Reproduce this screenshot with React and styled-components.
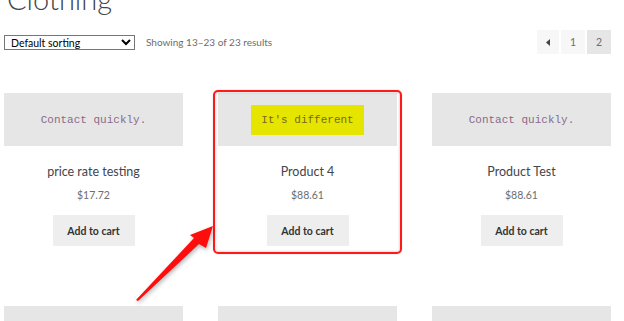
import styled, { createGlobalStyle } from "styled-components";

const GlobalStyle = createGlobalStyle`
  body {
    margin: 0;
    background: #ffffff;
    font-family: "Source Sans Pro", Lato, "Open Sans", sans-serif;
    color: #43454b;
    overflow: hidden;
  }
`;

const Page = styled.div`
  position: relative;
  width: 624px;
  height: 321px;
  padding: 0 13px 0 4px;
  box-sizing: border-box;
  overflow: hidden;
`;

const Title = styled.h1`
  margin: -16px 0 0 3px;
  font-family: Lato, sans-serif;
  font-weight: 300;
  font-size: 29px;
  line-height: 30px;
  color: #43454b;
`;

const Toolbar = styled.div`
  display: flex;
  align-items: center;
  margin-top: 16px;
  height: 24px;
`;

const Sorting = styled.select`
  width: 131px;
  height: 15px;
  padding: 0 0 0 2px;
  font-family: Lato, sans-serif;
  font-size: 10.5px;
  color: #000;
  border: 1px solid #767676;
  border-radius: 0;
  background: #fff;
`;

const Count = styled.span`
  margin-left: 11px;
  font-family: Lato, sans-serif;
  font-size: 10px;
  color: #6d6d6d;
`;

const Pager = styled.nav`
  margin-left: auto;
  display: flex;
  gap: 2px;
`;

const PageLink = styled.span`
  display: flex;
  align-items: center;
  justify-content: center;
  width: ${(p) => (p.$narrow ? 22 : 24)}px;
  height: 24px;
  font-family: Lato, sans-serif;
  font-size: 10.5px;
  color: #6d6d6d;
  background: ${(p) => (p.$current ? "#e6e6e6" : "#f7f7f7")};
`;

const Grid = styled.ul`
  list-style: none;
  margin: 39px 0 0;
  padding: 0;
  display: grid;
  grid-template-columns: repeat(3, 179px);
  column-gap: 35px;
  row-gap: 60px;
`;

const Card = styled.li`
  position: relative;
  display: flex;
  flex-direction: column;
  align-items: center;

  ${(p) =>
    p.$highlight &&
    `
    &::after {
      content: "";
      position: absolute;
      left: -5px;
      right: -5px;
      top: -3px;
      bottom: -8px;
      border: 2px solid #ff1a1a;
      border-radius: 5px;
      box-shadow: inset 0 0 3px rgba(0,0,0,0.25), 0 0 2px rgba(0,0,0,0.15);
      pointer-events: none;
    }
  `}
`;

const Thumb = styled.div`
  width: 100%;
  height: 53px;
  background: #e6e6e6;
  display: flex;
  align-items: center;
  justify-content: center;
`;

const ThumbText = styled.span`
  font-family: "Liberation Mono", monospace;
  font-size: 11px;
  color: ${(p) => (p.$marked ? "#7a6a1e" : "#8a6a8c")};
  background: ${(p) => (p.$marked ? "#e5e500" : "transparent")};
  padding: ${(p) => (p.$marked ? "8px 10px" : "0")};
  line-height: 14px;
`;

const Name = styled.h2`
  margin: 18px 0 0;
  font-family: Lato, sans-serif;
  font-weight: 400;
  font-size: 12.5px;
  line-height: 16px;
  color: #43454b;
`;

const Price = styled.span`
  margin-top: 8px;
  font-family: Lato, sans-serif;
  font-size: 10.5px;
  line-height: 14px;
  color: #6d6d6d;
`;

const CartButton = styled.button`
  margin-top: 13px;
  width: 82px;
  height: 31px;
  border: none;
  background: #eeeeee;
  font-family: Lato, sans-serif;
  font-weight: 700;
  font-size: 10.5px;
  color: #333333;
  cursor: pointer;
`;

const Pointer = styled.svg`
  position: absolute;
  left: 130px;
  top: 220px;
  width: 90px;
  height: 86px;
  overflow: visible;
  filter: drop-shadow(1px 2px 2px rgba(0, 0, 0, 0.3));
`;

const products = [
  { name: "price rate testing", price: "$17.72", thumb: "Contact quickly." },
  { name: "Product 4", price: "$88.61", thumb: "It's different", marked: true },
  { name: "Product Test", price: "$88.61", thumb: "Contact quickly." },
  { name: "", price: "", thumb: "" },
  { name: "", price: "", thumb: "" },
  { name: "", price: "", thumb: "" },
];

export default function App() {
  return (
    <Page>
      <GlobalStyle />
      <Title>Clothing</Title>
      <Toolbar>
        <Sorting defaultValue="default">
          <option value="default">Default sorting</option>
        </Sorting>
        <Count>Showing 13–23 of 23 results</Count>
        <Pager>
          <PageLink $narrow>
            <svg width="5" height="7" viewBox="0 0 5 7">
              <path d="M4 0 L0 3.5 L4 7 Z" fill="#43454b" />
            </svg>
          </PageLink>
          <PageLink>1</PageLink>
          <PageLink $current>2</PageLink>
        </Pager>
      </Toolbar>
      <Grid>
        {products.map((p, i) => (
          <Card key={i} $highlight={p.marked}>
            <Thumb>
              {p.thumb && <ThumbText $marked={p.marked}>{p.thumb}</ThumbText>}
            </Thumb>
            {p.name && <Name>{p.name}</Name>}
            {p.price && <Price>{p.price}</Price>}
            {p.name && <CartButton>Add to cart</CartButton>}
          </Card>
        ))}
      </Grid>
      <Pointer viewBox="0 0 90 86">
        <path
          d="M83 6 L60 15 L64 18 L6 80 L8 81 L69 24 L76 28 Z"
          fill="#ff0d0d"
        />
      </Pointer>
    </Page>
  );
}
